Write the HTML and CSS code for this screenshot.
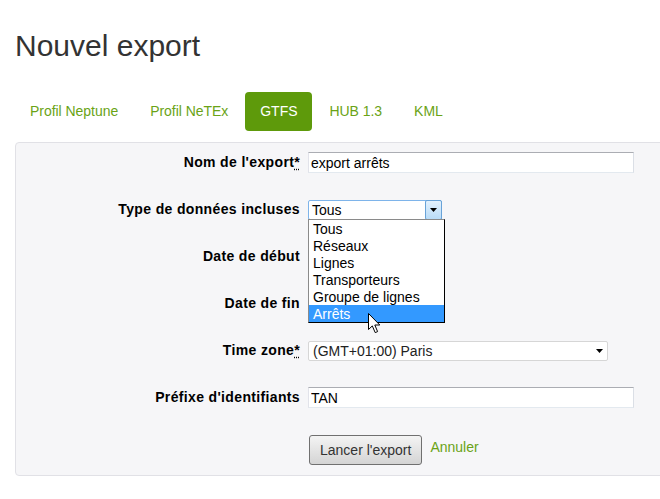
FILE: index.html
```html
<!DOCTYPE html>
<html lang="fr">
<head>
<meta charset="utf-8">
<title>Nouvel export</title>
<link rel="stylesheet" href="styles.css">
</head>
<body>
<div class="page">
  <h1 class="title">Nouvel export</h1>
  <ul class="tabs">
    <li><a class="tab" href="#">Profil Neptune</a></li>
    <li><a class="tab" href="#">Profil NeTEx</a></li>
    <li><a class="tab active" href="#">GTFS</a></li>
    <li><a class="tab" href="#">HUB 1.3</a></li>
    <li><a class="tab" href="#">KML</a></li>
  </ul>
  <form class="panel">
    <div class="row">
      <label class="lbl">Nom de l'export<abbr class="req" title="requis">*</abbr></label>
      <div class="ctl"><input class="txt" type="text" value="export arrêts"></div>
    </div>
    <div class="row">
      <label class="lbl">Type de données incluses</label>
      <div class="ctl">
        <div class="combo">
          <div class="sel">
            <span class="sel-text">Tous</span>
            <span class="sel-btn"><svg width="7" height="4" viewBox="0 0 7 4"><path d="M0 0H7L3.5 4Z" fill="#000"/></svg></span>
          </div>
          <ul class="list">
            <li class="opt">Tous</li>
            <li class="opt">Réseaux</li>
            <li class="opt">Lignes</li>
            <li class="opt">Transporteurs</li>
            <li class="opt">Groupe de lignes</li>
            <li class="opt hl">Arrêts</li>
          </ul>
          <svg class="cursor" width="13" height="21" viewBox="0 0 13 21"><path d="M0.5 0.5V16.5L4.3 12.9L7.2 19.6L9.6 18.6L6.8 12H11.8Z" fill="#fff" stroke="#000" stroke-width="1" stroke-linejoin="miter"/></svg>
        </div>
      </div>
    </div>
    <div class="row">
      <label class="lbl">Date de début</label>
      <div class="ctl"><input class="txt short" type="text"></div>
    </div>
    <div class="row">
      <label class="lbl">Date de fin</label>
      <div class="ctl"><input class="txt short" type="text"></div>
    </div>
    <div class="row">
      <label class="lbl">Time zone<abbr class="req" title="requis">*</abbr></label>
      <div class="ctl">
        <div class="tz">
          <span>(GMT+01:00) Paris</span>
          <svg width="7" height="4" viewBox="0 0 7 4"><path d="M0 0H7L3.5 4Z" fill="#000"/></svg>
        </div>
      </div>
    </div>
    <div class="row">
      <label class="lbl">Préfixe d'identifiants</label>
      <div class="ctl"><input class="txt" type="text" value="TAN"></div>
    </div>
    <div class="row actions">
      <div></div>
      <div class="ctl act">
        <button class="go" type="button">Lancer l'export</button>
        <a class="cancel" href="#">Annuler</a>
      </div>
    </div>
  </form>
</div>
</body>
</html>
```
FILE: styles.css
```css
html, body {
  margin: 0;
  padding: 0;
  background: #fff;
  overflow: hidden;
}
body {
  font-family: "Liberation Sans", Arial, sans-serif;
  font-size: 14px;
  color: #000;
}
.page {
  padding-left: 15px;
  width: 720px;
}
.title {
  margin: 29px 0 0;
  font-size: 30px;
  line-height: 33px;
  font-weight: normal;
  color: #333;
}
.tabs {
  display: flex;
  gap: 2px;
  list-style: none;
  margin: 30px 0 0;
  padding: 0;
}
.tab {
  display: block;
  padding: 10px 15px;
  line-height: 19px;
  font-size: 14px;
  letter-spacing: -0.04px;
  color: #6aa316;
  text-decoration: none;
  border-radius: 4px;
}
.tab.active {
  background: #5e9a0b;
  color: #fff;
}
.panel {
  margin: 11px 0 0;
  width: 700px;
  border: 1px solid #e1e1e6;
  border-radius: 4px;
  background: #f6f6f8;
  padding: 9px 0 10px;
}
.row {
  display: grid;
  grid-template-columns: 284px 1fr;
  column-gap: 8px;
  align-items: center;
  height: 21px;
  margin-bottom: 26px;
}
.row.actions {
  height: auto;
  margin-bottom: 0;
  align-items: start;
}
.lbl {
  text-align: right;
  font-weight: bold;
  font-size: 14px;
  line-height: 21px;
  letter-spacing: 0.35px;
  color: #000;
}
.req {
  text-decoration: underline dotted;
  text-underline-offset: 2px;
  cursor: help;
}
.ctl {
  position: relative;
  display: flex;
  align-items: center;
}
.txt {
  box-sizing: border-box;
  width: 326px;
  height: 21px;
  margin: 0;
  padding: 0 2px;
  border: 1px solid;
  border-color: #abadb3 #dbdfe6 #e3e9ef #e2e3ea;
  background: #fff;
  font: 14px "Liberation Sans", Arial, sans-serif;
  color: #000;
  outline: none;
}
.txt.short {
  width: 120px;
}
.combo {
  position: relative;
}
.sel {
  box-sizing: border-box;
  width: 134px;
  height: 20px;
  display: flex;
  align-items: stretch;
  border: 1px solid #7eb4ea;
  border-radius: 2px;
  background: #fff;
  font-size: 14px;
  line-height: 18px;
}
.sel-text {
  flex: 1;
  padding-left: 3px;
  color: #000;
}
.sel-btn {
  box-sizing: border-box;
  width: 17px;
  display: flex;
  align-items: center;
  justify-content: center;
  border: 1px solid #69a3d8;
  border-radius: 2px;
  margin: -1px -1px -1px 0;
  background: linear-gradient(#e3f1fd, #b9dcf8);
}
.list {
  position: absolute;
  z-index: 5;
  top: 19px;
  left: 0;
  box-sizing: border-box;
  width: 137px;
  margin: 0;
  padding: 0;
  list-style: none;
  border: 1px solid #000;
  border-left-color: #8a8a8a;
  border-top-color: #8a8a8a;
  background: #fff;
}
.opt {
  height: 17px;
  line-height: 18px;
  padding-left: 4px;
  font-size: 14px;
  color: #000;
  white-space: nowrap;
}
.opt.hl {
  background: #3399ff;
  color: #fff;
}
.cursor {
  position: absolute;
  z-index: 6;
  left: 60px;
  top: 113px;
}
.tz {
  box-sizing: border-box;
  width: 300px;
  height: 20px;
  display: flex;
  align-items: center;
  justify-content: space-between;
  padding: 0 4px;
  border: 1px solid #d6d6d6;
  border-radius: 2px;
  background: #fff;
  font-size: 14px;
  color: #222;
}
.act {
  align-items: flex-start;
}
.go {
  box-sizing: border-box;
  height: 30px;
  margin: 1px 0 0 1px;
  padding: 0 10px;
  border: 1px solid #707070;
  border-radius: 3px;
  background: linear-gradient(#f4f4f4, #d4d4d4);
  font: 14px "Liberation Sans", Arial, sans-serif;
  color: #333;
}
.cancel {
  margin: 3px 0 0 8px;
  line-height: 20px;
  color: #6aa316;
  text-decoration: none;
}
```
